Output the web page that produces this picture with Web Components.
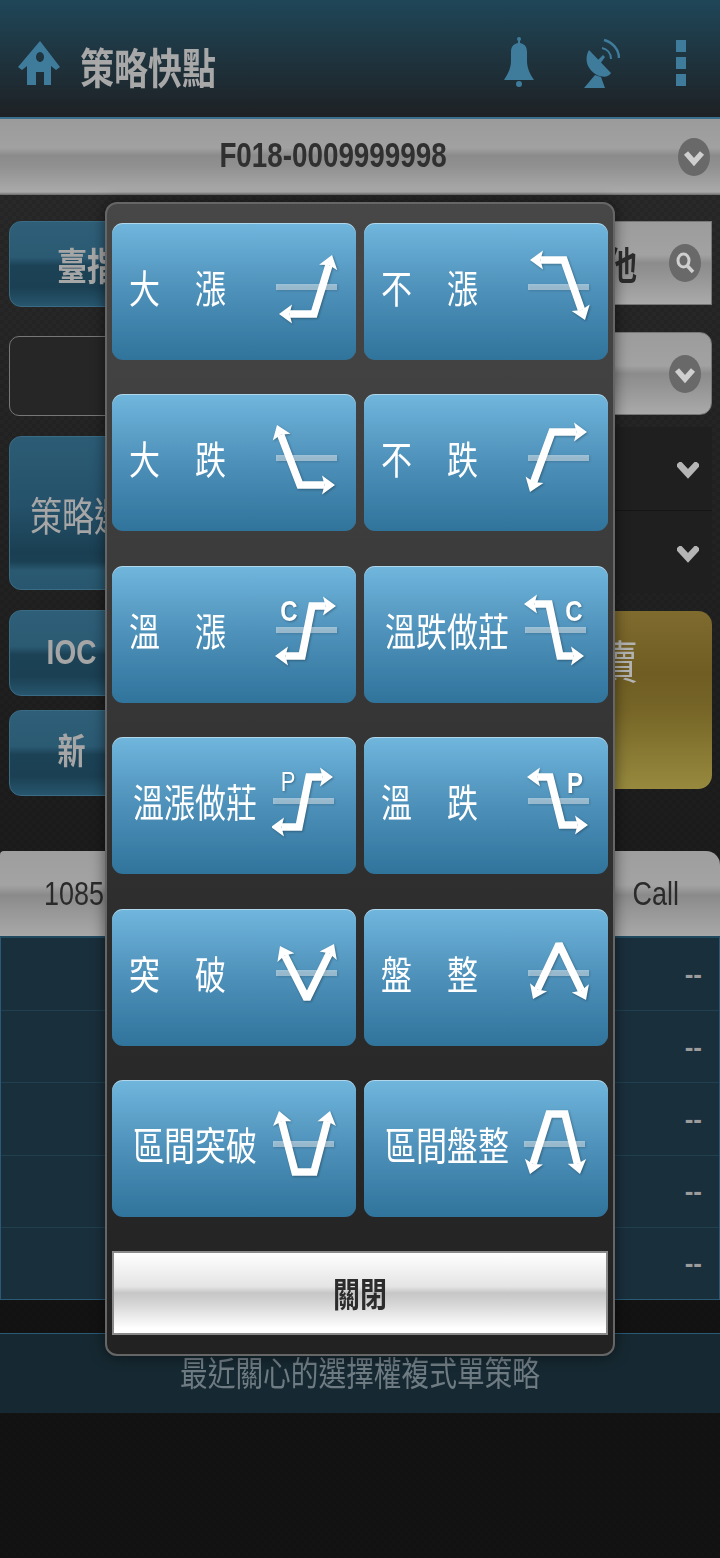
<!DOCTYPE html>
<html lang="zh-Hant">
<head>
<meta charset="utf-8">
<title>策略快點</title>
<style>
  html, body { margin: 0; padding: 0; background: #151515; }
  body { font-family: "Noto Sans CJK TC", "Liberation Sans", sans-serif; }
</style>
</head>
<body>
<quick-page>
  <app-header title-text="策略快點"></app-header>
  <account-bar>F018-0009999998</account-bar>
  <order-form></order-form>
  <quote-table></quote-table>
  <recent-banner>最近關心的選擇權複式單策略</recent-banner>
  <strategy-modal>
    <strategy-btn label="大　漲" path="167,91 202,91 220,32" bar="164"></strategy-btn>
    <strategy-btn label="不　漲" path="166,37 200,37 221,97" bar="164"></strategy-btn>
    <strategy-btn label="大　跌" path="165,31 188,91 223,91" bar="164"></strategy-btn>
    <strategy-btn label="不　跌" path="166,98 188,38 223,38" bar="164"></strategy-btn>
    <strategy-btn label="溫　漲" path="163,90 190,90 200,40 224,40" bar="164" letter="C" lx="177" ly="46" bold></strategy-btn>
    <strategy-btn label="溫跌做莊" wide path="160,38 185,38 196,90 220,90" bar="161" letter="C" lx="210" ly="46" bold></strategy-btn>
    <strategy-btn label="溫漲做莊" wide path="159,90 187,90 197,40 221,40" bar="161" letter="P" lx="176" ly="45"></strategy-btn>
    <strategy-btn label="溫　跌" path="163,40 186,40 198,88 224,88" bar="164" letter="P" lx="211" ly="47" bold></strategy-btn>
    <strategy-btn label="突　破" path="168,37 195,90 222,35" bar="164"></strategy-btn>
    <strategy-btn label="盤　整" path="169,90 195,35 222,91" bar="164"></strategy-btn>
    <strategy-btn label="區間突破" wide path="167,31 183,92 202,92 218,31" bar="161"></strategy-btn>
    <strategy-btn label="區間盤整" wide path="166,94 185,34 201,34 216,94" bar="160"></strategy-btn>
  </strategy-modal>
</quick-page>

<script>
const chevron = (w, h, color, sw) => `
  <svg width="${w}" height="${h}" viewBox="0 0 20 15">
    <polyline points="3,3 10,10.5 17,3" fill="none" stroke="${color}" stroke-width="${sw}" stroke-linecap="square"/>
  </svg>`;

const circleIcon = (inner) => `
  <svg width="32" height="38" viewBox="0 0 32 38">
    <ellipse cx="16" cy="19" rx="16" ry="19" fill="#696969"/>
    ${inner}
  </svg>`;
const circleChevron = circleIcon(`<polyline points="8,15 16,24 24,15" fill="none" stroke="#cfcfcf" stroke-width="5.5"/>`);
const circleSearch = circleIcon(`
  <ellipse cx="14.5" cy="16.5" rx="5.5" ry="6.5" fill="none" stroke="#cfcfcf" stroke-width="3"/>
  <line x1="18.5" y1="22" x2="24" y2="28" stroke="#cfcfcf" stroke-width="3.5"/>`);

class QuickPage extends HTMLElement {
  constructor() {
    super();
    this.attachShadow({ mode: "open" }).innerHTML = `
      <style>
        :host {
          display: block;
          position: relative;
          width: 720px;
          height: 1558px;
          overflow: hidden;
          background:
            linear-gradient(to bottom, rgba(46,46,46,.55), rgba(16,16,16,.9) 85%),
            repeating-conic-gradient(#2c2c2c 0 25%, #232323 0 50%) 0 0 / 8px 8px;
        }
      </style>
      <slot></slot>`;
  }
}

class AppHeader extends HTMLElement {
  constructor() {
    super();
    this.attachShadow({ mode: "open" }).innerHTML = `
      <style>
        :host {
          display: flex;
          align-items: flex-start;
          box-sizing: border-box;
          height: 119px;
          padding: 37px 34px 0 18px;
          background: linear-gradient(to bottom, #1f4658, #1e2124);
          border-bottom: 2px solid #3b6f90;
        }
        svg { display: block; flex: none; }
        .home { margin-top: 4px; }
        h1 {
          margin: 6px 0 0 20px;
          font: bold 34px/46px "Noto Sans CJK TC", sans-serif;
          color: #a8a8a8;
          transform: scaleY(1.25);
          white-space: nowrap;
        }
        .spacer { flex: 1; }
        .sat { margin-left: 50px; margin-top: 1px; }
        .kebab { display: flex; flex-direction: column; gap: 5px; margin: 3px 0 0 56px; }
        .kebab i { display: block; width: 10px; height: 12px; background: #3f7c9c; }
      </style>
      <svg class="home" width="42" height="44" viewBox="0 0 42 44">
        <path fill="#3f7c9c" fill-rule="evenodd" d="M22 0 L42 26 L38 29 L33 25 L33 44 L26 44 L26 31 L18 31 L18 44 L9 44 L9 25 L4 29 L0 26 Z M22 11 a4 5 0 1 0 .01 0 Z"/>
      </svg>
      <h1></h1>
      <div class="spacer"></div>
      <svg width="30" height="50" viewBox="0 0 30 50">
        <circle cx="15" cy="2" r="2" fill="#3f7c9c"/>
        <path fill="#3f7c9c" d="M14 3 h2 v3 C21 7 23 10 23 15 L23 24 C23 31 26 37 30 43 L0 43 C4 37 7 31 7 24 L7 15 C7 10 9 7 14 6 Z"/>
        <ellipse cx="15" cy="47" rx="3" ry="3" fill="#3f7c9c"/>
      </svg>
      <svg class="sat" width="36" height="50" viewBox="0 0 36 50">
        <path fill="#3f7c9c" d="M5 12 L27 35 C24 40 18 39 13 37 C5 33 -1 23 5 12 Z"/>
        <path fill="#3f7c9c" d="M11 37 L17 39 L21 50 L0 50 Z"/>
        <path fill="#3f7c9c" d="M13 23 L19 17 L21 19 L16 26 Z"/>
        <path fill="none" stroke="#3f7c9c" stroke-width="2" d="M18 10 C23 11 27 15 27 21"/>
        <path fill="none" stroke="#3f7c9c" stroke-width="2.5" d="M20 2 C28 4 35 11 35 20"/>
      </svg>
      <div class="kebab"><i></i><i></i><i></i></div>`;
    this.shadowRoot.querySelector("h1").textContent = this.getAttribute("title-text");
  }
}

class AccountBar extends HTMLElement {
  constructor() {
    super();
    this.attachShadow({ mode: "open" }).innerHTML = `
      <style>
        :host {
          display: flex;
          align-items: center;
          box-sizing: border-box;
          height: 76px;
          padding-right: 10px;
          background: linear-gradient(to bottom, #9b9b9b, #a1a1a1 38%, #8b8b8b 48%, #909090 62%, #aaaaaa 96%, #6a6a6a);
        }
        .text { flex: 1; text-align: center; padding-right: 12px; padding-bottom: 2px; }
        span {
          display: inline-block;
          font: bold 27.8px/40px "Liberation Sans", sans-serif;
          color: #303030;
          transform: scaleY(1.25);
        }
        svg { display: block; }
      </style>
      <div class="text"><span><slot></slot></span></div>
      ${circleChevron}`;
  }
}

class OrderForm extends HTMLElement {
  constructor() {
    super();
    this.attachShadow({ mode: "open" }).innerHTML = `
      <style>
        :host {
          display: grid;
          grid-template-columns: 330px 352px;
          column-gap: 21px;
          height: 656px;
          padding: 26px 8px 0 9px;
          box-sizing: border-box;
        }
        .col { display: flex; flex-direction: column; }
        .btn {
          display: flex;
          align-items: center;
          box-sizing: border-box;
          border-radius: 12px;
          border: 1px solid #3a6b84;
          background: linear-gradient(to bottom, #2f5f78, #2b5a73 42%, #1c4256 52%, #1b4053 78%, #27566e);
          color: #a6a6a6;
        }
        .t {
          display: inline-block;
          font: 30px/40px "Noto Sans CJK TC", sans-serif;
          transform: scaleY(1.25);
        }
        .index { height: 86px; padding-left: 47px; }
        .index .t { font-weight: bold; }
        .blank {
          height: 80px;
          margin-top: 29px;
          box-sizing: border-box;
          border: 1px solid #777;
          border-radius: 10px;
          background: #262626;
        }
        .strategy {
          height: 154px;
          margin-top: 20px;
          padding-left: 20px;
          background: linear-gradient(to bottom, #2c5c75, #25516a 45%, #1a3f52 76%, #1b4154 82%, #2a5a72 88%, #27566e);
        }
        .strategy .t { font-size: 32px; }
        .small { width: 125px; height: 86px; justify-content: center; }
        .small .t { font-weight: bold; font-family: "Liberation Sans", "Noto Sans CJK TC", sans-serif; font-size: 28px; }
        .ioc { margin-top: 20px; }
        .new { margin-top: 14px; }
        .gray {
          display: flex;
          align-items: center;
          justify-content: flex-end;
          box-sizing: border-box;
          padding-right: 10px;
          background: linear-gradient(to bottom, #9c9c9c, #a2a2a2 40%, #8c8c8c 50%, #939393 64%, #aaaaaa);
          border: 1px solid #777;
        }
        .search { height: 84px; }
        .search .t { color: #2b2b2b; font-weight: bold; margin-right: 32px; }
        .select { height: 83px; margin-top: 27px; border-radius: 0 12px 12px 0; }
        .rows { margin-top: 12px; background: #1f1f1f; }
        .rows div {
          display: flex;
          align-items: center;
          justify-content: flex-end;
          box-sizing: border-box;
          height: 83px;
          padding: 4px 13px 0 0;
        }
        .rows div + div { border-top: 1px solid #151515; }
        .rows svg { display: block; }
        .gold {
          height: 178px;
          margin-top: 18px;
          box-sizing: border-box;
          padding: 28px 74px 0 0;
          text-align: right;
          border-radius: 0 14px 14px 0;
          background: linear-gradient(to bottom, #7f6b2e, #6f5d23 35%, #766527 55%, #978a3e);
          color: #b3b3b3;
        }
        .gold .t { font-size: 36px; }
      </style>
      <div class="col">
        <div class="btn index"><span class="t">臺指</span></div>
        <div class="blank"></div>
        <div class="btn strategy"><span class="t">策略選</span></div>
        <div class="btn small ioc"><span class="t">IOC</span></div>
        <div class="btn small new"><span class="t">新</span></div>
      </div>
      <div class="col">
        <div class="gray search"><span class="t">他</span>${circleSearch}</div>
        <div class="gray select">${circleChevron}</div>
        <div class="rows">
          <div>${chevron(22, 17, "#b5b5b5", 6)}</div>
          <div>${chevron(22, 17, "#b5b5b5", 6)}</div>
        </div>
        <div class="gold"><span class="t">賣</span></div>
      </div>`;
  }
}

class QuoteTable extends HTMLElement {
  constructor() {
    super();
    const rows = Array.from({ length: 5 }, () => `<div class="row"><span>--</span></div>`).join("");
    this.attachShadow({ mode: "open" }).innerHTML = `
      <style>
        :host { display: block; }
        .head {
          display: flex;
          align-items: center;
          justify-content: space-between;
          box-sizing: border-box;
          height: 85px;
          padding: 0 41px 0 44px;
          border-radius: 4px 14px 0 0;
          background: linear-gradient(to bottom, #9e9e9e, #a3a3a3 40%, #8a8a8a 52%, #949494 66%, #a8a8a8);
          color: #2a2a2a;
        }
        .head b {
          font: 27px/36px "Liberation Sans", sans-serif;
          transform: scaleY(1.25);
        }
        .body {
          border-top: 2px solid #1f4a60;
          border-bottom: 1px solid #2a5a75;
          border-left: 1px solid #2a5a75;
          border-right: 1px solid #2a5a75;
          background: #1a2f3c;
        }
        .row {
          display: flex;
          align-items: center;
          justify-content: flex-end;
          box-sizing: border-box;
          height: 72.2px;
          padding-right: 17px;
          color: #9c9c9c;
          font: bold 26px/24px "Liberation Sans", sans-serif;
        }
        .row + .row { border-top: 1px solid #21404f; }
      </style>
      <div class="head"><b>1085</b><b>Call</b></div>
      <div class="body">${rows}</div>`;
  }
}

class RecentBanner extends HTMLElement {
  constructor() {
    super();
    this.attachShadow({ mode: "open" }).innerHTML = `
      <style>
        :host {
          display: flex;
          align-items: center;
          justify-content: center;
          box-sizing: border-box;
          height: 80px;
          margin-top: 33px;
          padding-bottom: 4px;
          border-top: 1px solid #2b5a75;
          background: #162831;
          color: #6f7b82;
        }
        span {
          display: inline-block;
          font: 27.7px/40px "Noto Sans CJK TC", sans-serif;
          transform: scaleY(1.25);
          white-space: nowrap;
        }
      </style>
      <span><slot></slot></span>`;
  }
}

class StrategyModal extends HTMLElement {
  constructor() {
    super();
    this.attachShadow({ mode: "open" }).innerHTML = `
      <style>
        :host {
          display: block;
          position: absolute;
          left: 105px;
          top: 202px;
          width: 510px;
          height: 1154px;
          box-sizing: border-box;
          padding: 19px 5px 0;
          border: 2px solid #666;
          border-radius: 12px;
          background: linear-gradient(to bottom, #474747, #3a3a3a 35%, #2c2c2c 65%, #222);
          box-shadow: 0 0 14px rgba(0,0,0,.5);
        }
        .grid {
          display: grid;
          grid-template-columns: 244px 244px;
          column-gap: 8px;
          row-gap: 34.4px;
        }
        .close {
          display: flex;
          align-items: center;
          justify-content: center;
          box-sizing: border-box;
          height: 84px;
          margin-top: 34px;
          border: 2px solid #8a8a8a;
          background: linear-gradient(to bottom, #ffffff, #e4e4e4 42%, #c6c6c6 50%, #d6d6d6 64%, #ffffff 94%);
          color: #2c2c2c;
        }
        .close span {
          display: inline-block;
          font: bold 27px/36px "Noto Sans CJK TC", sans-serif;
          transform: scaleY(1.25);
        }
      </style>
      <div class="grid"><slot></slot></div>
      <div class="close"><span>關閉</span></div>`;
  }
}

// arrow line with a head on both ends, coordinates are relative to the button
function arrowSvg(pointsAttr, barX, letter) {
  const pts = pointsAttr.split(" ").map((p) => p.split(",").map(Number));
  const head = (tip, from) => {
    const d = Math.hypot(tip[0] - from[0], tip[1] - from[1]);
    const ux = (tip[0] - from[0]) / d, uy = (tip[1] - from[1]) / d;
    const len = 13, half = 9.5, notch = 2.5;
    const bx = tip[0] - ux * len, by = tip[1] - uy * len;
    const nx = tip[0] - ux * (len - notch), ny = tip[1] - uy * (len - notch);
    const poly = [
      [tip[0], tip[1]],
      [bx - uy * half, by + ux * half],
      [nx, ny],
      [bx + uy * half, by - ux * half],
    ].map((p) => p.map((v) => v.toFixed(1)).join(",")).join(" ");
    return { poly, end: [nx, ny] };
  };
  const a = head(pts[0], pts[1]);
  const b = head(pts[pts.length - 1], pts[pts.length - 2]);
  const line = [a.end, ...pts.slice(1, -1), b.end].map((p) => p.join(",")).join(" ");
  return `
    <svg width="80" height="100" viewBox="160 20 80 100">
      <rect x="${barX}" y="61" width="61" height="6" fill="#fff" opacity=".45"/>
      ${letter}
      <polyline points="${line}" fill="none" stroke="#fff" stroke-width="7.5" stroke-linejoin="miter" stroke-miterlimit="2"/>
      <polygon points="${a.poly}" fill="#fff"/>
      <polygon points="${b.poly}" fill="#fff"/>
    </svg>`;
}

class StrategyBtn extends HTMLElement {
  constructor() {
    super();
    const root = this.attachShadow({ mode: "open" });
    let letter = "";
    if (this.hasAttribute("letter")) {
      const bold = this.hasAttribute("bold");
      letter = `<text transform="translate(${this.getAttribute("lx")} ${+this.getAttribute("ly") + 9}) scale(1 1.22)"
        text-anchor="middle" fill="#fff" font-family="Liberation Sans, sans-serif"
        font-weight="${bold ? "bold" : "normal"}" font-size="${bold ? 24 : 22}">${this.getAttribute("letter")}</text>`;
    }
    root.innerHTML = `
      <style>
        :host {
          display: flex;
          justify-content: space-between;
          box-sizing: border-box;
          height: 137px;
          border-radius: 11px;
          background: linear-gradient(to bottom, #70b6dd, #4d90b9 50%, #30739b);
          box-shadow: inset 0 1px 0 rgba(255,255,255,.45);
          color: #fff;
          overflow: hidden;
        }
        .label {
          align-self: center;
          padding: 0 0 9px 17px;
          font: 400 31px/40px "Noto Sans CJK TC", sans-serif;
          letter-spacing: 2px;
          transform: scaleY(1.25);
          transform-origin: 50% 45%;
          white-space: nowrap;
        }
        :host([wide]) .label { padding-left: 21px; letter-spacing: 0; }
        svg { display: block; flex: none; margin: 20px 4px 0 0; filter: drop-shadow(1px 1px 1px rgba(0,0,0,.3)); }
      </style>
      <span class="label"></span>
      ${arrowSvg(this.getAttribute("path"), this.getAttribute("bar"), letter)}`;
    root.querySelector(".label").textContent = this.getAttribute("label");
  }
}

customElements.define("quick-page", QuickPage);
customElements.define("app-header", AppHeader);
customElements.define("account-bar", AccountBar);
customElements.define("order-form", OrderForm);
customElements.define("quote-table", QuoteTable);
customElements.define("recent-banner", RecentBanner);
customElements.define("strategy-modal", StrategyModal);
customElements.define("strategy-btn", StrategyBtn);
</script>
</body>
</html>
